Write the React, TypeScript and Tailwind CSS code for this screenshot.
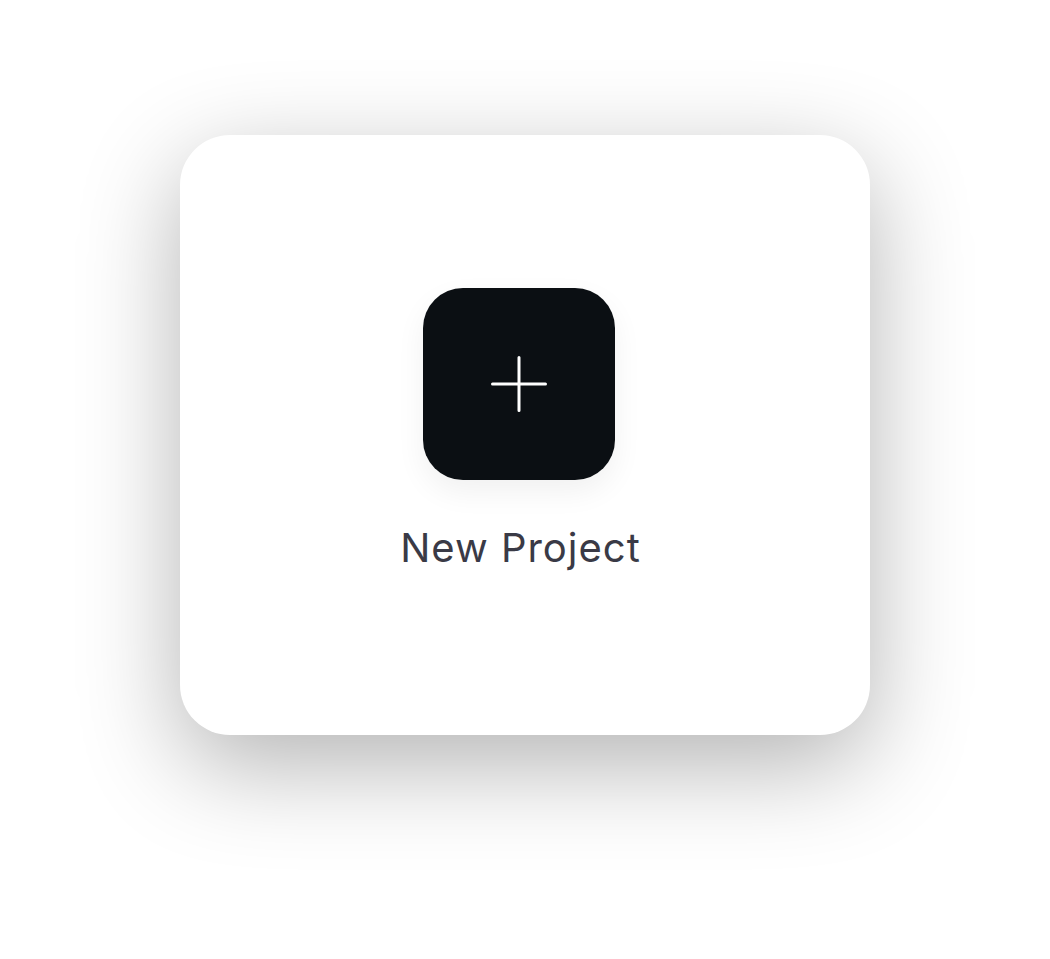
import React from "react";

function PlusIcon() {
  return (
    <svg width="56" height="56" viewBox="0 0 56 56" fill="none" aria-hidden="true">
      <path d="M28 1.5v53M1.5 28h53" stroke="#ffffff" strokeWidth={3} strokeLinecap="round" />
    </svg>
  );
}

export default function App() {
  return (
    <div className="flex min-h-[959px] w-full justify-center bg-white pt-[135px] font-['Inter','Liberation_Sans',sans-serif]">
      {/* Card */}
      <button
        type="button"
        className="flex h-[600px] w-[690px] flex-col items-center rounded-[50px] bg-white pt-[153px] pr-3 shadow-[0_30px_100px_rgba(0,0,0,0.3)]"
      >
        <span className="flex h-[192px] w-[192px] items-center justify-center rounded-[40px] bg-[#0b0f13] shadow-[0_12px_30px_rgba(0,0,0,0.06)]">
          <PlusIcon />
        </span>
        <span className="mt-[44px] ml-[3px] text-[40px] leading-[48px] font-normal tracking-[1px] text-[#3a3a46]">
          New Project
        </span>
      </button>
    </div>
  );
}
